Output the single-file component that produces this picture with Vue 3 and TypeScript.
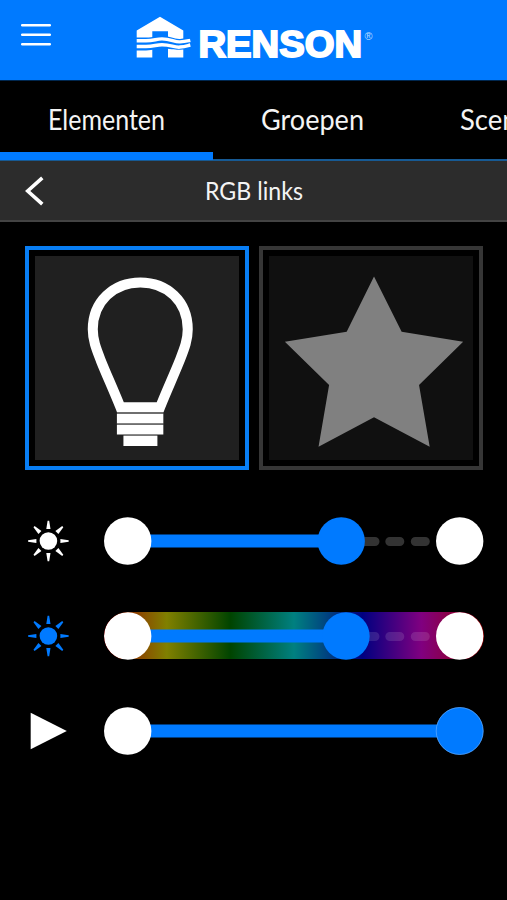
<script setup lang="ts">
import { ref } from 'vue'

interface Tab { label: string; width: number }
interface Slider { id: string; icon: 'sun' | 'play'; tint: string; value: number; end: boolean; spectrum: boolean }

const tabs: Tab[] = [
  { label: 'Elementen', width: 117 },
  { label: 'Groepen', width: 103 },
  { label: 'Scenes', width: 84 },
]
const activeTab = ref(0)
const selectedTile = ref(0)

const sliders: Slider[] = [
  { id: 'brightness', icon: 'sun', tint: '#ffffff', value: 213.7, end: true, spectrum: false },
  { id: 'hue', icon: 'sun', tint: '#007aff', value: 218.5, end: true, spectrum: true },
  { id: 'speed', icon: 'play', tint: '#ffffff', value: 332.2, end: false, spectrum: false },
]
const rays = [0, 45, 90, 135, 180, 225, 270, 315]
</script>

<template>
  <div class="app">
    <header class="header">
      <button class="menu" aria-label="Menu">
        <svg width="30" height="24" viewBox="0 0 30 24">
          <path d="M1.2 2.2H28.8M1.2 11.7H28.8M1.2 21.2H28.8" stroke="#fff" stroke-width="2.5" stroke-linecap="round" />
        </svg>
      </button>
      <svg class="logo" width="240" height="48" viewBox="134 14 240 48">
        <path d="M160 16.8L183.3 30.6V57.4H168V31.3H152.3V57.4H136.7V30.6Z" fill="#fff" />
        <path d="M135.5 37.6H146C154 37.6 156 36 162 36C171 36 174 39.2 180 38.9C185 38.6 187 38 191 37.3V48.3C187 49.2 185 49.6 180 49.8C174 50 171 48.5 162 48.5C156 48.5 154 50.4 146 50.4H135.5Z" fill="#007aff" />
        <path d="M136.7 40.8H146C154 40.8 156 38.9 162 38.9C171 38.9 174 42.2 180 41.9C185 41.6 187 41 190.3 40.3" fill="none" stroke="#fff" stroke-width="3.4" />
        <path d="M136.7 46.6H146C154 46.6 156 44.7 162 44.7C171 44.7 174 47.6 180 47.1C185 46.6 187 45.8 190.3 45" fill="none" stroke="#fff" stroke-width="3.5" />
        <text class="brand" x="198.5" y="57" textLength="163.5" lengthAdjust="spacingAndGlyphs">RENSON</text>
        <text class="reg" x="364.5" y="39.7" textLength="8" lengthAdjust="spacingAndGlyphs">®</text>
      </svg>
    </header>

    <nav class="tabs">
      <button v-for="(tab, i) in tabs" :key="tab.label" class="tab" :class="{ active: i === activeTab }" @click="activeTab = i">
        <svg :width="tab.width" height="40" class="label">
          <text x="0" y="29.5" font-size="28.5" :textLength="tab.width" lengthAdjust="spacingAndGlyphs">{{ tab.label }}</text>
        </svg>
      </button>
    </nav>

    <div class="subheader">
      <svg class="back" width="20" height="32" viewBox="0 0 20 32">
        <path d="M17.3 2.8L2.7 16L17.3 29.2" fill="none" stroke="#fff" stroke-width="3.6" />
      </svg>
      <svg class="label" width="98" height="36">
        <text x="0" y="27" font-size="25" textLength="98" lengthAdjust="spacingAndGlyphs">RGB links</text>
      </svg>
    </div>

    <div class="tiles">
      <div class="tile" :class="{ selected: selectedTile === 0 }" @click="selectedTile = 0">
        <svg viewBox="35.5 257 203 203">
          <path d="M120.5 407.5C114 391 107 376 101 361C96.5 349.5 93 341 93 330C93 302 114 283.3 140.3 283.3C167 283.3 187.5 302 187.5 330C187.5 341 184 349.5 179.5 361C173.5 376 166.5 391 160 407.5Z" fill="none" stroke="#fff" stroke-width="10" />
          <path d="M117 414H163.2V423.7H117ZM117 425H163.2V434.7H117ZM123.5 436.2H157.3V446H123.5Z" fill="#fff" />
          <path d="M117 413.2H163.2M117 424.3H163.2M123.5 435.5H157.3" stroke="#777" stroke-width="1.4" />
        </svg>
      </div>
      <div class="tile" :class="{ selected: selectedTile === 1 }" @click="selectedTile = 1">
        <svg viewBox="270 257 203 203">
          <path d="M374.5 277.5L402 332.5L463.2 342.3L419.3 385.3L429.9 446.7L374.5 417.5L319.3 446.7L329.8 385.3L285.8 342.3L347.3 332.5Z" fill="#808080" />
        </svg>
      </div>
    </div>

    <div class="sliders">
      <div v-for="s in sliders" :key="s.id" class="row">
        <svg class="icon" width="44" height="44" viewBox="-22 -22 44 44" :fill="s.tint">
          <g v-if="s.icon === 'sun'" transform="translate(0.4 0)">
            <circle r="8.8" />
            <path v-for="r in rays" :key="r" d="M-2.1 -12H2.1L0.8 -20.3H-0.8Z" :transform="`rotate(${r})`" />
          </g>
          <path v-else d="M-17.3 -18.2L18.8 0L-17.3 18.2Z" />
        </svg>
        <svg class="track" :class="{ spectrum: s.spectrum }" width="380" height="48" viewBox="0 0 380 48">
          <path v-if="s.end" d="M261 24.5H271M285.8 24.5H295.8M311.3 24.5H321.3" :stroke="s.spectrum ? '#ffffff' : '#333333'" :stroke-opacity="s.spectrum ? 0.12 : 1" stroke-width="9" stroke-linecap="round" />
          <path :d="`M24 24H${24 + s.value}`" stroke="#007aff" stroke-width="13" />
          <circle cx="23.7" cy="24" r="23.7" fill="#fff" />
          <circle v-if="s.end" cx="355.7" cy="24" r="23.7" fill="#fff" />
          <circle :cx="23.5 + s.value" cy="24" r="23.7" fill="#007aff" />
          <circle v-if="!s.end" :cx="23.5 + s.value" cy="24" r="23.5" fill="none" stroke="#73b5ff" stroke-width="0.6" />
        </svg>
      </div>
    </div>
  </div>
</template>

<style>
body { margin: 0; background: #000; overflow: hidden; }
</style>

<style scoped>
.app {
  width: 507px;
  height: 900px;
  overflow: hidden;
  background: #000;
  color: #f4f4f4;
  font-family: Lato, sans-serif;
}
button { border: 0; padding: 0; background: none; color: inherit; font: inherit; }
svg { display: block; }
.header {
  box-sizing: border-box;
  height: 81px;
  padding: 14px 0 0 20.5px;
  display: flex;
  background: #007aff;
  border-bottom: 1px solid #00274f;
}
.menu { width: 30px; height: 24px; margin-top: 9.4px; }
.logo { margin-left: 83.2px; overflow: visible; }
.brand {
  font: bold 36px "Liberation Sans", sans-serif;
  fill: #fff;
  stroke: #fff;
  stroke-width: 1.9px;
}
.reg { font: 11px "Liberation Sans", sans-serif; fill: #b9dbff; }
.tabs {
  box-sizing: border-box;
  height: 80px;
  display: flex;
  align-items: flex-start;
  overflow: hidden;
  background: linear-gradient(#175a94, #175a94) bottom / 100% 2.5px no-repeat;
}
.tab {
  box-sizing: border-box;
  flex: none;
  display: flex;
  align-items: flex-start;
  height: 79px;
  padding: 19px 48px 0;
  border-bottom: 8px solid transparent;
}
.tab.active { border-bottom-color: #007aff; }
.label { overflow: visible; fill: #f4f4f4; }
.subheader {
  box-sizing: border-box;
  height: 61px;
  display: flex;
  align-items: center;
  padding-left: 25px;
  background: #2c2c2c;
  border-bottom: 2px solid #434343;
}
.subheader .label { margin-left: 160px; }
.tiles { display: flex; gap: 10px; padding: 24px 0 0 25px; }
.tile {
  box-sizing: border-box;
  width: 224px;
  height: 224px;
  padding: 6px;
  border: 4px solid #363636;
}
.tile svg { width: 100%; height: 100%; background: #101010; }
.tile.selected { border-color: #087ef5; }
.tile.selected svg { background: #202020; }
.sliders { display: flex; flex-direction: column; gap: 46.8px; padding-top: 47px; }
.row { height: 48px; display: flex; align-items: center; padding-left: 26px; }
.track { margin-left: 33.5px; }
.track.spectrum {
  border-radius: 24px;
  background: linear-gradient(90deg, #990000 0%, #808000 16.5%, #004400 33.3%, #008080 50%, #000080 68%, #800080 83.5%, #990000 100%) center / 100% 47px no-repeat;
}
</style>
